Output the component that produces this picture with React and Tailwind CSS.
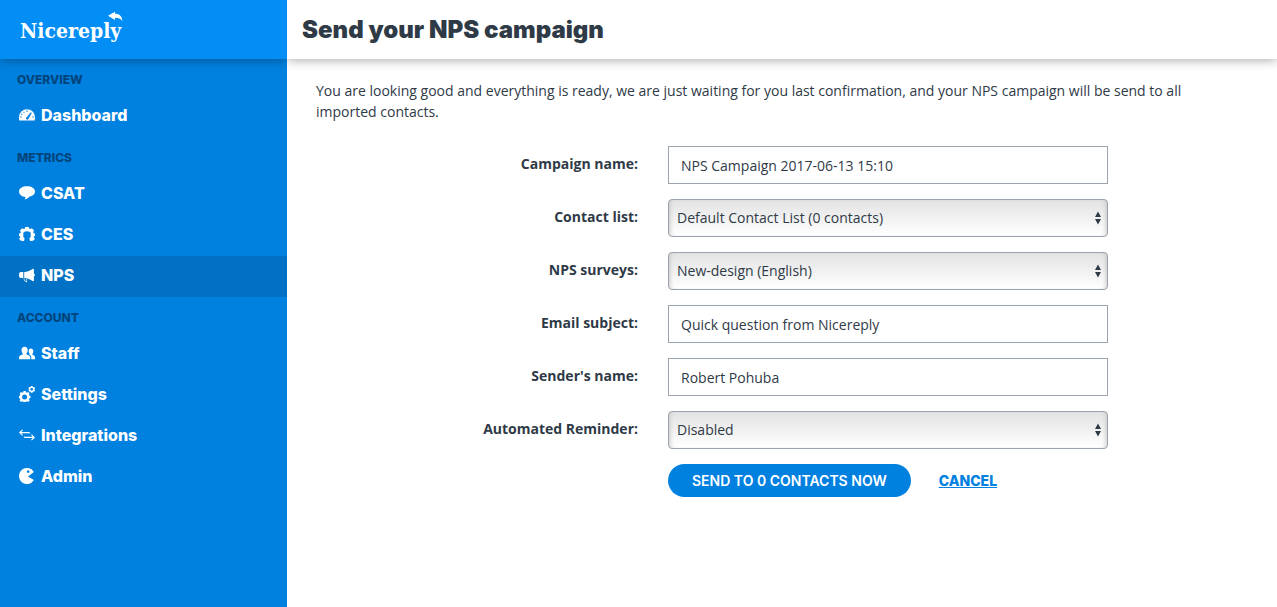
import { useState } from "react";
import clsx from "clsx";

function Icon({ children }) {
  return (
    <svg
      className="size-4 flex-none"
      viewBox="0 0 16 16"
      fill="currentColor"
      aria-hidden="true"
    >
      {children}
    </svg>
  );
}

function GaugeIcon() {
  return (
    <Icon>
      <path
        fillRule="evenodd"
        d="M8 2.200a8 8 0 0 0-8 8c0 1.200.1 2.300.3 3.300h15.400c.2-1 .3-2.100.3-3.300a8 8 0 0 0-8-8zM7.500 3.600h1v1.300h-1zM4.200 4.900l.8-.5.7 1.100-.8.5zM1.900 7.400l.5-.9 1.200.7-.5.900zM1.200 10.400V9.400h1.500v1zM13.300 10.400V9.400h1.500v1zM11.900 5.200l.9.9-3.500 6.200c-.9.900-2.600.2-2.200-1.300.1-.3.300-.6.600-.8z"
      />
    </Icon>
  );
}

function BubbleIcon() {
  return (
    <Icon>
      <path d="M8 1.200c-4.500 0-8 2-8 5.400 0 3.100 3 5.200 6.500 5.400-.1 1-.4 1.800-1 2.500 2.200-.4 3.700-1.400 4.600-2.700 3.400-.5 5.900-2.400 5.900-5.200 0-3.400-3.500-5.400-8-5.400z" />
    </Icon>
  );
}

function WrenchRingIcon() {
  return (
    <Icon>
      <path d="M6.300 1h3.400l.4 1.500 1.100.5 1.700-.8 2.200 2.200-.9 1.600.4 1.200 1.400.4v2.300l-1.200.5v1l1.200 1.400-1.800 1.900-3.200.2-.6-2.600 1.300-1.200V7.600C11.700 6 10.300 5.200 8 5.200S4.300 6 4.300 7.600v3.500l1.300 1.200-.6 2.600-3.200-.2L0 12.800l1.200-1.400v-1L0 9.900V7.600l1.400-.4.4-1.200-.9-1.600 2.200-2.200 1.700.8 1.100-.5z" />
    </Icon>
  );
}

function MegaphoneIcon() {
  return (
    <Icon>
      <path d="M1.800 5h2.500v6H1.800C.6 11 0 9.700 0 8s.6-3 1.800-3zM5.200 5c3.200-.2 6.100-1.300 8.800-3.200l.9.3v4.300c1.300.5 1.300 2.700 0 3.200v4.300l-.9.300c-2.700-1.900-5.600-3.100-8.800-3.300z" />
      <path
        d="M5 11.500c.1 1.800.9 3 2.800 3.500l-.8-1.600.8-.6-1-.9"
        fill="none"
        stroke="currentColor"
        strokeWidth="0.8"
      />
    </Icon>
  );
}

function StaffIcon() {
  return (
    <Icon>
      <path d="M5.600 1.800c2 0 3.100 1.300 3.100 3.200 0 1.500-.6 2.700-1.200 3.400v1c1.900.8 3.500 1.200 3.700 2.800l.1 2H0v-2c.2-1.600 1.800-2 3.700-2.800v-1C3.100 7.700 2.500 6.500 2.500 5c0-1.900 1.100-3.200 3.100-3.200z" />
      <path d="M11.800 3.600c1.600 0 2.500 1 2.500 2.600 0 1.200-.4 2.100-.9 2.700v.8c1.400.6 2.500.9 2.600 2.300v2.200h-3.700v-1.800c-.2-1.500-1.200-2.200-2.300-2.800l.6-.3v-.5c-.5-.6-.9-1.500-.9-2.600 0-1.600.6-2.600 2.100-2.600z" />
    </Icon>
  );
}

function CogsIcon() {
  return (
    <Icon>
      <path
        fillRule="evenodd"
        d="M4.500 5h2.200l.3 1.300 1 .4 1.200-.7 1.400 1.500-.7 1.200.4.900 1.200.4v2l-1.200.4-.4.900.7 1.200-1.400 1.500-1.200-.7-1 .4-.3 1.200H4.500l-.3-1.200-1-.4-1.200.7L.6 14.500l.7-1.200-.4-.9L0 12v-2l.9-.4.4-.9L.6 7.500 2 6l1.200.7 1-.4zM5.600 8.500a2.500 2.500 0 1 0 0 5 2.500 2.500 0 0 0 0-5z"
      />
      <path
        fillRule="evenodd"
        d="M12 0h1.500l.3.900.8.300.9-.3.5 1.300-.6.700v.7l.6.700-.6 1.200-.9-.1-.7.500-.3.800H12l-.3-.8-.7-.5-.9.100-.7-1.200.6-.7v-.7l-.6-.7.7-1.300.9.300.7-.3zM12.700 1.900a1.400 1.400 0 1 0 0 2.800 1.400 1.400 0 0 0 0-2.800z"
      />
    </Icon>
  );
}

function SwapIcon() {
  return (
    <Icon>
      <path
        d="M3.500 2.800.8 5.600l2.700 2.800M1 5.600h8.500q1.300 0 1.300 1M12.500 7.600l2.700 2.800-2.700 2.800M15 10.400H6.500q-1.300 0-1.300-1"
        fill="none"
        stroke="currentColor"
        strokeWidth="1.100"
      />
    </Icon>
  );
}

function PacmanIcon() {
  return (
    <Icon>
      <path
        fillRule="evenodd"
        d="M14.900 4A8 8 0 1 0 14.900 12L9 8.400zM9.200 2.300a1.300 1.300 0 1 1 0 2.600 1.300 1.300 0 0 1 0-2.600z"
      />
    </Icon>
  );
}

const MENU = [
  {
    title: "OVERVIEW",
    items: [{ label: "Dashboard", icon: GaugeIcon }],
  },
  {
    title: "METRICS",
    items: [
      { label: "CSAT", icon: BubbleIcon },
      { label: "CES", icon: WrenchRingIcon },
      { label: "NPS", icon: MegaphoneIcon, active: true },
    ],
  },
  {
    title: "ACCOUNT",
    items: [
      { label: "Staff", icon: StaffIcon },
      { label: "Settings", icon: CogsIcon },
      { label: "Integrations", icon: SwapIcon },
      { label: "Admin", icon: PacmanIcon },
    ],
  },
];

const FIELDS = [
  { id: "name", label: "Campaign name:", value: "NPS Campaign 2017-06-13 15:10" },
  {
    id: "list",
    label: "Contact list:",
    options: ["Default Contact List (0 contacts)"],
  },
  { id: "survey", label: "NPS surveys:", options: ["New-design (English)"] },
  {
    id: "subject",
    label: "Email subject:",
    value: "Quick question from Nicereply",
  },
  { id: "sender", label: "Sender's name:", value: "Robert Pohuba" },
  {
    id: "reminder",
    label: "Automated Reminder:",
    options: ["Disabled", "Enabled"],
  },
];

function Logo() {
  return (
    <a
      href="#home"
      className="relative pt-0.5 font-['DejaVu_Serif_Condensed','DejaVu_Serif',serif] text-[21px] leading-7 font-bold text-white"
    >
      Nicereply
      <svg
        className="absolute -top-1 -right-0.5 h-3 w-4"
        viewBox="0 0 16 12"
        fill="currentColor"
        aria-hidden="true"
      >
        <path d="M1 4.800 8 .8v2c4.500 0 7.300 2.600 7.300 7.400C14 7.700 11.500 6.800 8 6.800V9z" />
      </svg>
    </a>
  );
}

function Sidebar() {
  return (
    <aside className="w-[287px] flex-none overflow-hidden bg-[#0080df] font-['Inter',sans-serif]">
      <div className="flex h-[59px] items-center bg-[#038ef5] px-5 shadow-[0_1px_10px_rgba(0,0,0,0.35)]">
        <Logo />
      </div>
      <nav>
        {MENU.map((section) => (
          <section key={section.title}>
            <h2 className="flex h-[37px] items-center px-[17px] pt-1 text-xs font-extrabold text-[#00457b]">
              {section.title}
            </h2>
            {section.items.map(({ label, icon: ItemIcon, active }) => (
              <a
                key={label}
                href={`#${label.toLowerCase()}`}
                className={clsx(
                  "flex h-[41px] items-center gap-[6px] px-[19px] pb-[3px] text-base font-extrabold text-white",
                  active && "bg-[#0071c4]",
                )}
              >
                <ItemIcon />
                {label}
              </a>
            ))}
          </section>
        ))}
      </nav>
    </aside>
  );
}

function Field({ field }) {
  const [value, setValue] = useState(field.value ?? field.options[0]);
  const onChange = (e) => setValue(e.target.value);

  return (
    <>
      <label htmlFor={field.id} className="pb-0.5 text-right font-bold">
        {field.label}
      </label>
      {field.options ? (
        <div className="relative">
          <select
            id={field.id}
            value={value}
            onChange={onChange}
            className="h-[38px] w-full appearance-none rounded border border-[#9ba3ad] bg-linear-to-b from-[#e3e3e3] to-white px-2 shadow-[inset_4px_0_4px_-3px_#c8c8c8,inset_-4px_0_4px_-3px_#c8c8c8]"
          >
            {field.options.map((option) => (
              <option key={option}>{option}</option>
            ))}
          </select>
          <svg
            className="pointer-events-none absolute top-3 right-[7px] h-3.5 w-1.5"
            viewBox="0 0 6 14"
            fill="currentColor"
            aria-hidden="true"
          >
            <path d="M3 .5 6 6H0zM3 13.500 6 8H0z" />
          </svg>
        </div>
      ) : (
        <input
          id={field.id}
          type="text"
          value={value}
          onChange={onChange}
          className="h-[38px] w-full border border-[#9ba3ad] bg-white px-3"
        />
      )}
    </>
  );
}

function App() {
  return (
    <div className="flex min-h-screen bg-white text-sm text-[#2f3a47]">
      <Sidebar />
      <main className="min-w-0 flex-1 overflow-hidden font-['Open_Sans',sans-serif]">
        <header className="flex h-[59px] items-center px-[15px] shadow-[0_1px_10px_rgba(0,0,0,0.35)]">
          <h1 className="font-['Inter',sans-serif] text-2xl font-black">
            Send your NPS campaign
          </h1>
        </header>
        <div className="px-[29px] pt-[21px]">
          <p className="pr-3 leading-[21px]">
            You are looking good and everything is ready, we are just waiting
            for you last confirmation, and your NPS campaign will be send to all
            imported contacts.
          </p>
          <form
            className="mt-6 grid grid-cols-[322px_minmax(0,440px)] items-center gap-x-[30px] gap-y-[15px]"
            onSubmit={(e) => e.preventDefault()}
          >
            {FIELDS.map((field) => (
              <Field key={field.id} field={field} />
            ))}
            <div className="col-start-2 flex items-center gap-7 font-['Inter',sans-serif]">
              <button
                type="submit"
                className="h-[33px] rounded-full bg-[#0080df] px-6 font-semibold whitespace-nowrap text-white"
              >
                SEND TO 0 CONTACTS NOW
              </button>
              <a
                href="#cancel"
                className="font-extrabold text-[#0080df] underline"
              >
                CANCEL
              </a>
            </div>
          </form>
        </div>
      </main>
    </div>
  );
}

export default App;
